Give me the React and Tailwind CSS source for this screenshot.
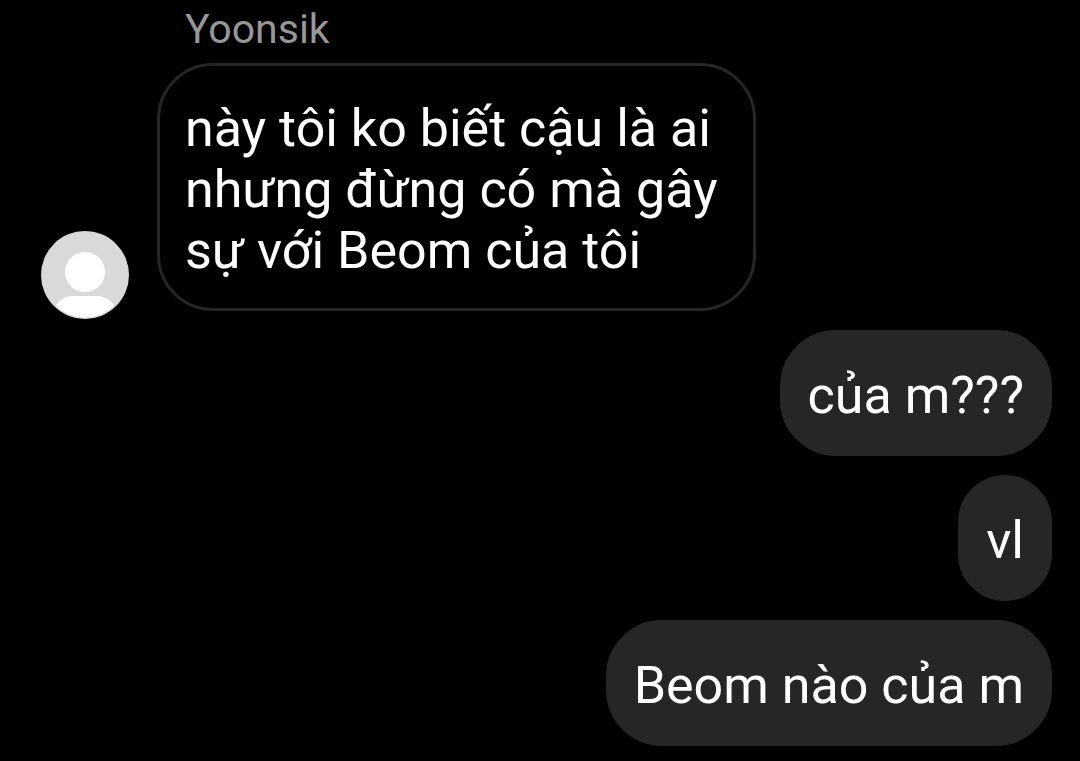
const thread = [
  {
    id: 1,
    sender: "Yoonsik",
    text: "này tôi ko biết cậu là ai nhưng đừng có mà gây sự với Beom của tôi",
  },
  { id: 2, mine: true, text: "của m???" },
  { id: 3, mine: true, text: "vl" },
  { id: 4, mine: true, text: "Beom nào của m" },
];

function Avatar() {
  return (
    <svg viewBox="0 0 88 88" className="w-22 h-22 shrink-0 -mb-2" role="img" aria-label="Avatar">
      <defs>
        <clipPath id="avatar-clip">
          <circle cx="44" cy="44" r="42.5" />
        </clipPath>
      </defs>
      <circle cx="44" cy="44" r="44" fill="#d9d9d9" />
      <circle cx="44" cy="41" r="20" fill="#fff" />
      <rect x="12" y="65" width="64" height="50" rx="20" fill="#fff" clipPath="url(#avatar-clip)" />
    </svg>
  );
}

function Bubble({ mine, text }) {
  return (
    <p
      className={`max-w-[599px] rounded-[56px] border-3 border-[#262626] px-[25px] pt-8 pb-[27px] text-[52px] leading-[61px] ${
        mine ? "bg-[#262626]" : ""
      }`}
    >
      {text}
    </p>
  );
}

function Received({ message }) {
  return (
    <li className="flex items-end gap-7">
      <Avatar />
      <div className="min-w-0">
        <p className="pl-7 mb-3 text-[41px] leading-11 text-[#979797]">{message.sender}</p>
        <Bubble text={message.text} />
      </div>
    </li>
  );
}

function Sent({ message }) {
  return (
    <li className="flex justify-end">
      <Bubble mine text={message.text} />
    </li>
  );
}

export default function App() {
  return (
    <main className="min-h-screen bg-black text-white font-[Roboto,sans-serif]">
      <ul className="flex flex-col gap-[19px] pt-[7px] pb-3 pl-[41px] pr-7">
        {thread.map((message) =>
          message.mine ? (
            <Sent key={message.id} message={message} />
          ) : (
            <Received key={message.id} message={message} />
          )
        )}
      </ul>
    </main>
  );
}
